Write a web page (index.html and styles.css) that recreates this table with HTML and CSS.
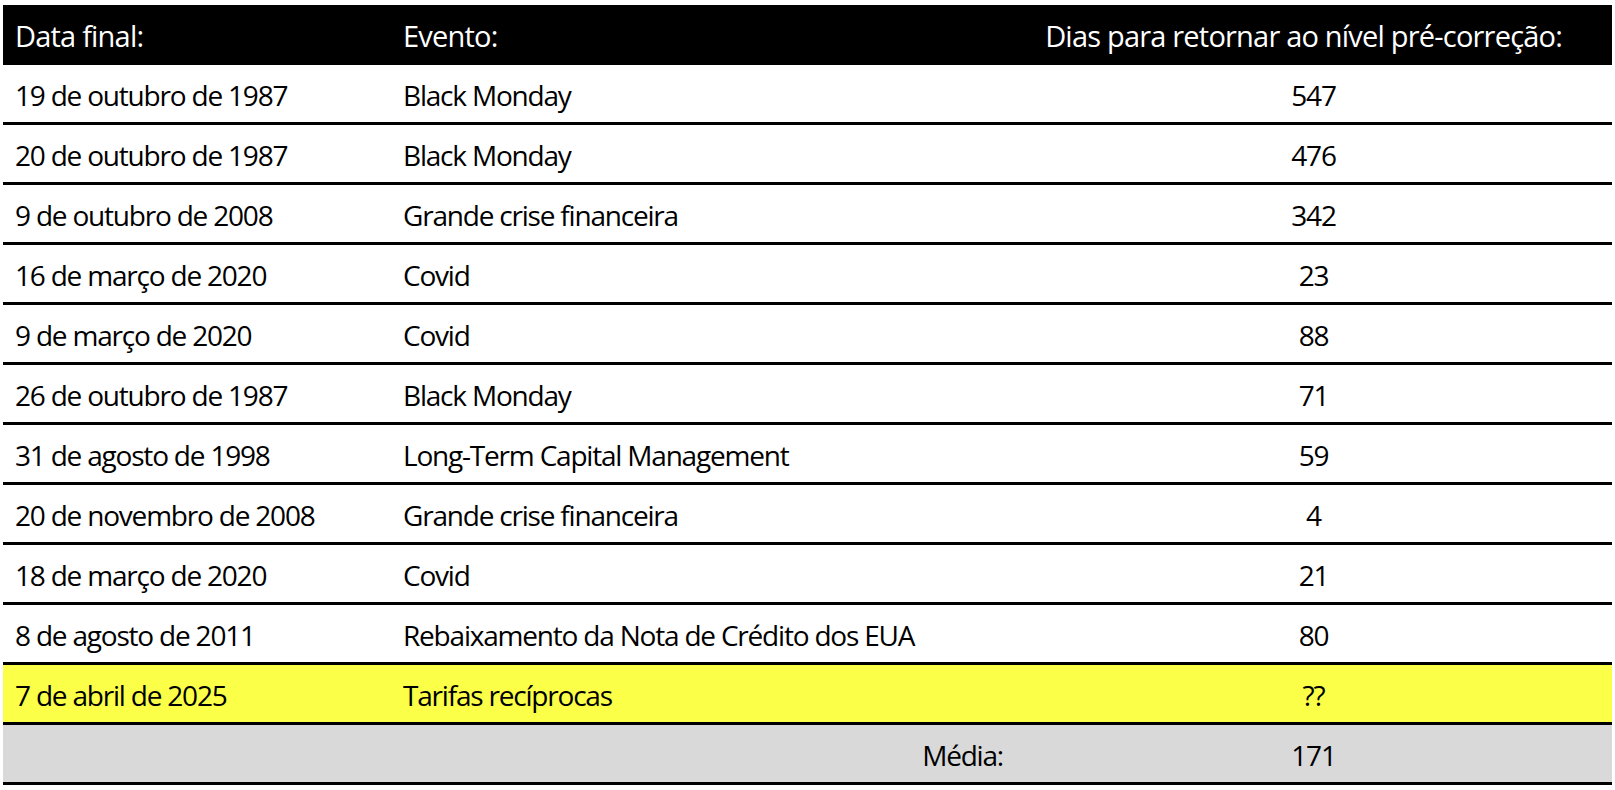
FILE: index.html
```html
<!DOCTYPE html>
<html lang="pt">
<head>
<meta charset="utf-8">
<title>Dias para retornar ao nível pré-correção</title>
<link rel="stylesheet" href="styles.css">
</head>
<body>
<div class="table">
  <div class="row head">
    <div class="cell c1">Data final:</div>
    <div class="cell c2">Evento:</div>
    <div class="cell c3 right">Dias para retornar ao nível pré-correção:</div>
  </div>
  <div class="row"><div class="cell c1">19 de outubro de 1987</div><div class="cell c2">Black Monday</div><div class="cell c3">547</div></div>
  <div class="row"><div class="cell c1">20 de outubro de 1987</div><div class="cell c2">Black Monday</div><div class="cell c3">476</div></div>
  <div class="row"><div class="cell c1">9 de outubro de 2008</div><div class="cell c2">Grande crise financeira</div><div class="cell c3">342</div></div>
  <div class="row"><div class="cell c1">16 de março de 2020</div><div class="cell c2">Covid</div><div class="cell c3">23</div></div>
  <div class="row"><div class="cell c1">9 de março de 2020</div><div class="cell c2">Covid</div><div class="cell c3">88</div></div>
  <div class="row"><div class="cell c1">26 de outubro de 1987</div><div class="cell c2">Black Monday</div><div class="cell c3">71</div></div>
  <div class="row"><div class="cell c1">31 de agosto de 1998</div><div class="cell c2">Long-Term Capital Management</div><div class="cell c3">59</div></div>
  <div class="row"><div class="cell c1">20 de novembro de 2008</div><div class="cell c2">Grande crise financeira</div><div class="cell c3">4</div></div>
  <div class="row"><div class="cell c1">18 de março de 2020</div><div class="cell c2">Covid</div><div class="cell c3">21</div></div>
  <div class="row"><div class="cell c1">8 de agosto de 2011</div><div class="cell c2">Rebaixamento da Nota de Crédito dos EUA</div><div class="cell c3">80</div></div>
  <div class="row highlight"><div class="cell c1">7 de abril de 2025</div><div class="cell c2">Tarifas recíprocas</div><div class="cell c3">??</div></div>
  <div class="row total"><div class="cell c1"></div><div class="cell c2 label">Média:</div><div class="cell c3">171</div></div>
</div>
</body>
</html>
```
FILE: styles.css
```css
html, body {
  margin: 0;
  padding: 0;
  background: #ffffff;
}

body {
  padding: 5px 3px 0 3px;
  font-family: "Open Sans", "Noto Sans", sans-serif;
  font-size: 28px;
  letter-spacing: -1.2px;
  color: #000;
}

.table {
  width: 1609px;
  display: flex;
  flex-direction: column;
}

.row {
  display: grid;
  grid-template-columns: 388px 624px 597px;
  height: 57px;
  border-bottom: 3px solid #000;
  background: #fff;
}

.row.head {
  height: 60px;
  border-bottom: none;
  background: #000;
  color: #fff;
  font-size: 29px;
  letter-spacing: -0.8px;
}

.row.highlight {
  background: #fbff47;
}

.row.total {
  background: #d9d9d9;
}

.cell {
  display: flex;
  align-items: center;
  padding: 2px 12px 0 12px;
  white-space: nowrap;
}

.head .cell {
  padding-top: 0;
}

.c3 {
  justify-content: center;
  padding: 2px 0 0 0;
}

.c3.right {
  justify-content: flex-end;
  padding: 0 50px 0 0;
}

.c2.label {
  justify-content: flex-end;
}
```
